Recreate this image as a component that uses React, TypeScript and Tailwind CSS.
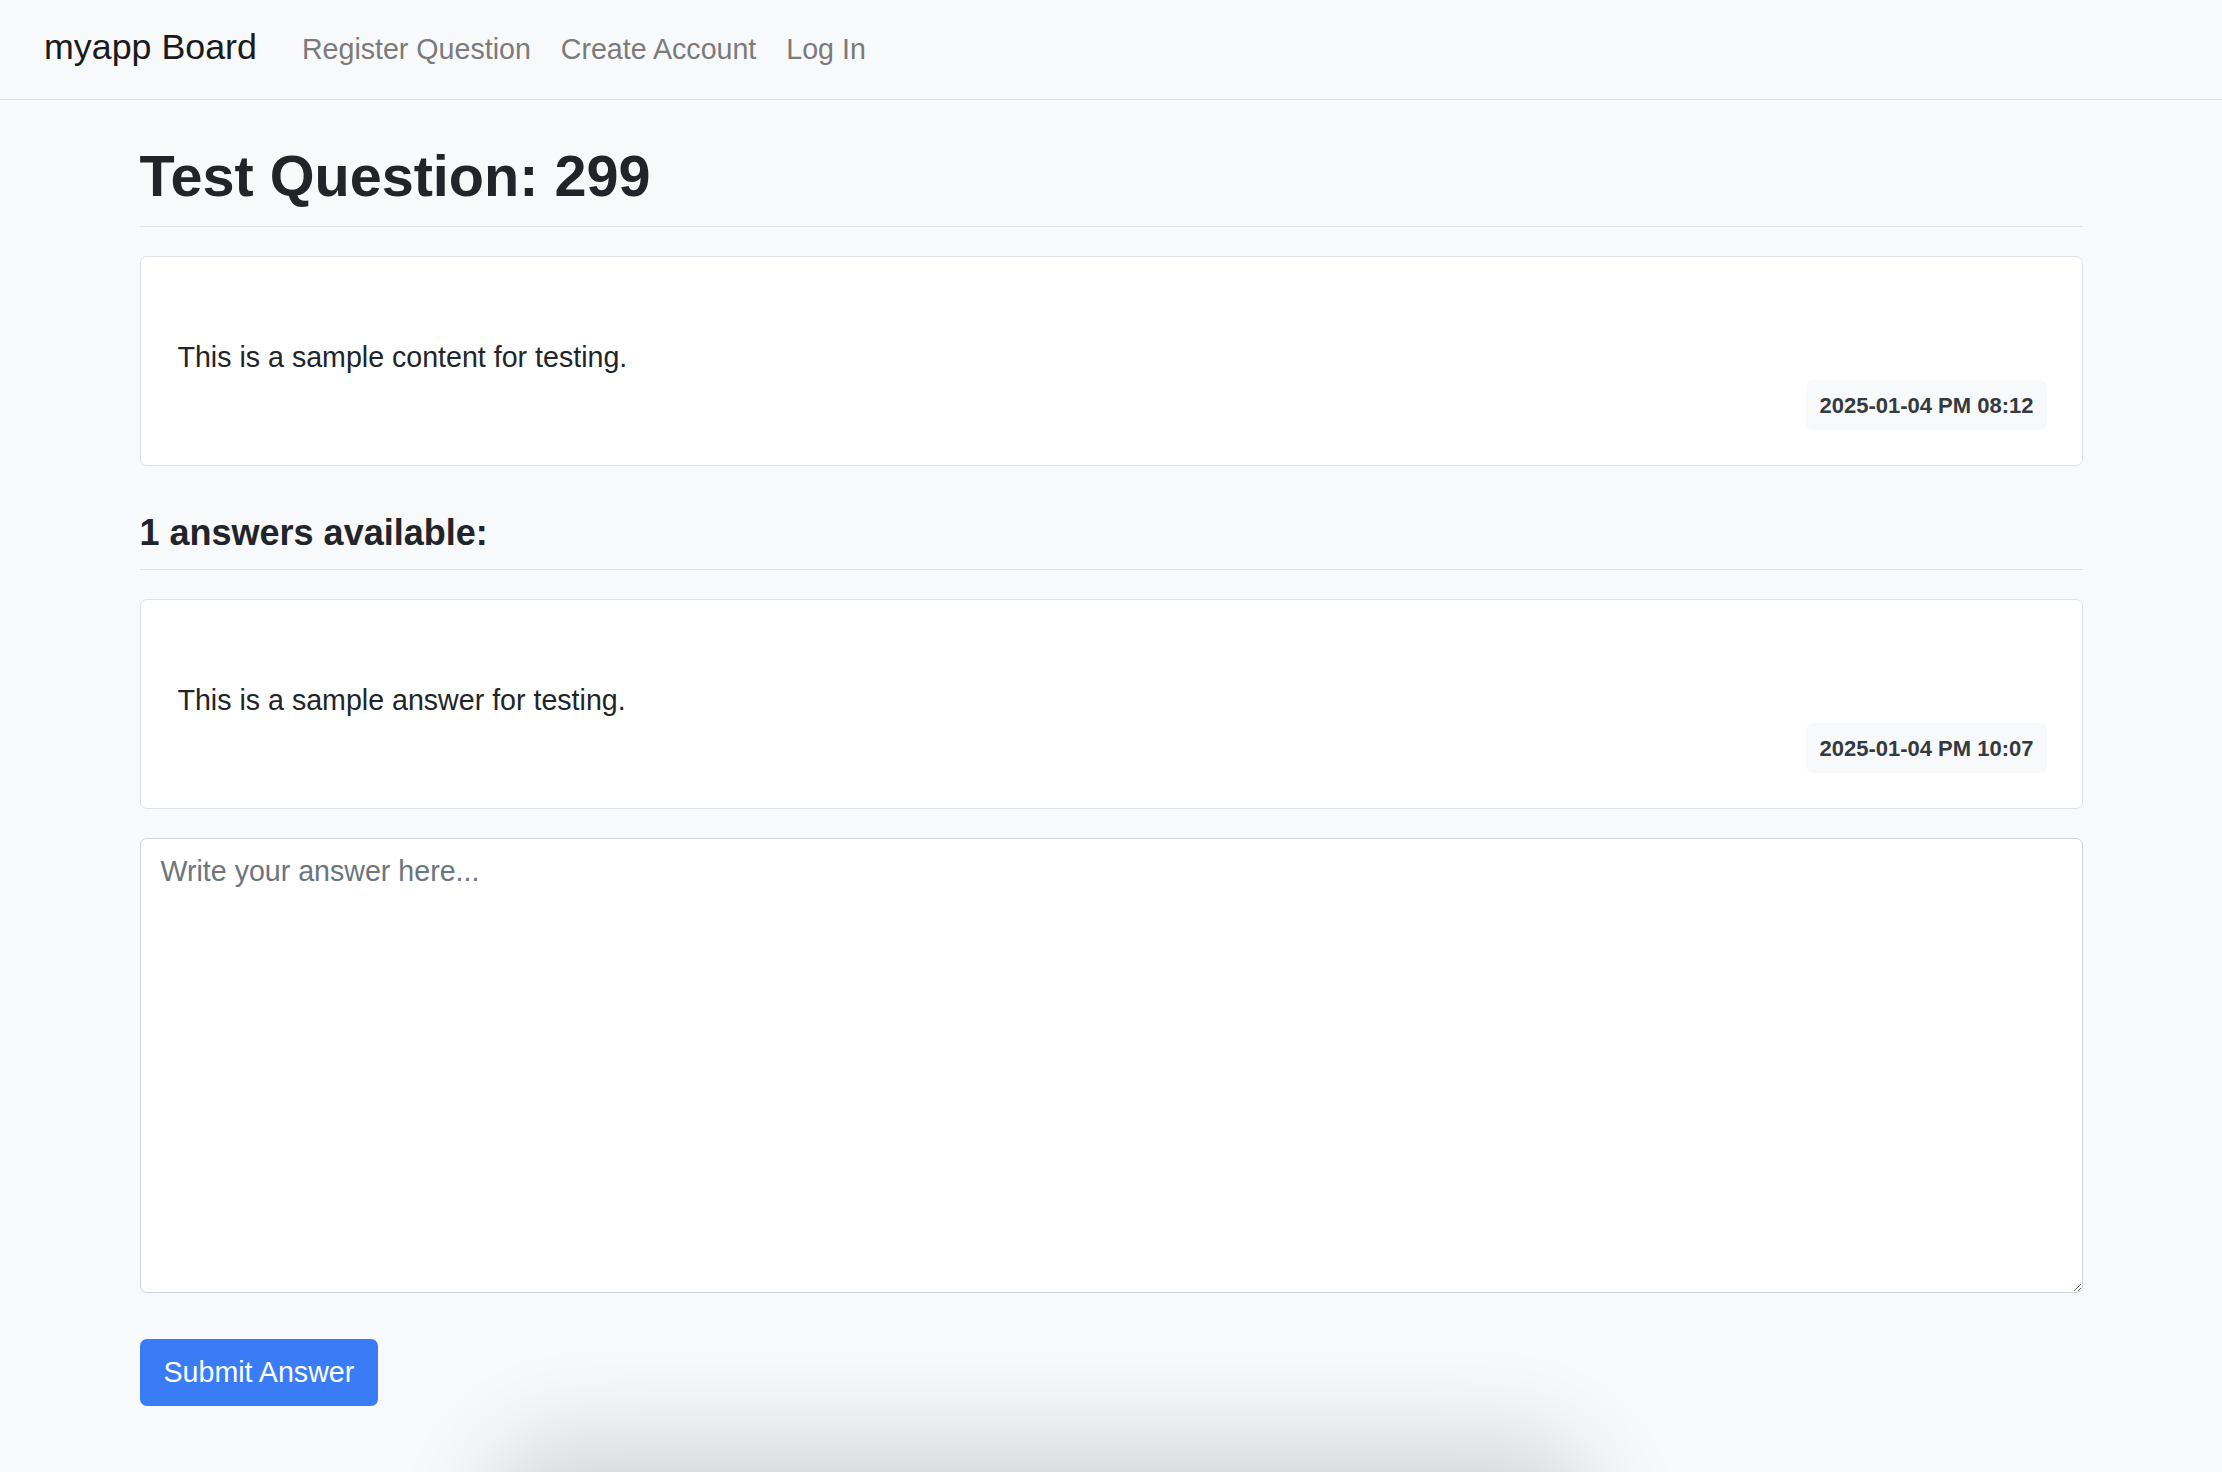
import React from 'react';

const font = { fontFamily: '"Liberation Sans", Arial, Helvetica, sans-serif' };

interface PostCardProps {
    content: string;
    date: string;
}

const PostCard: React.FC<PostCardProps> = ({ content, date }) => (
    <div className="border border-[#dee2e6] rounded-[7px] bg-white pl-[37px] pr-[35px] pt-[79px] pb-[35px]">
        <p className="text-[28.6px] leading-[42px] text-[#212529]">{content}</p>
        <div className="flex justify-end mt-[2px]">
            <span className="h-[50px] flex items-center px-[13px] rounded-[7px] bg-[#f8f9fa] text-[22px] font-bold text-[#343a40]">
                {date}
            </span>
        </div>
    </div>
);

const App: React.FC = () => {
    return (
        <div className="min-h-screen bg-[#f8f9fa] relative overflow-hidden" style={font}>
            <nav className="h-[100px] border-b border-[#dee2e6] flex items-center pl-[44px] pb-[3px]">
                <a className="text-[35.8px] text-[#1a1a1a] mr-[45px]">myapp Board</a>
                <div className="flex items-center gap-[30px] text-[28.6px] text-[#7b7b7b] pt-[2px]">
                    <a>Register Question</a>
                    <a>Create Account</a>
                    <a>Log In</a>
                </div>
            </nav>

            <main className="mx-auto w-[1943px] pb-[60px]">
                <h1 className="mt-[42px] text-[57.6px] leading-[68px] font-bold text-[#212529] pb-[16px] border-b border-[#dee2e6] mb-[29px]">
                    Test Question: 299
                </h1>

                <PostCard content="This is a sample content for testing." date="2025-01-04 PM 08:12" />

                <h5 className="mt-[45px] text-[36px] leading-[43px] font-bold text-[#212529] pb-[15px] border-b border-[#dee2e6] mb-[29px]">
                    1 answers available:
                </h5>

                <PostCard content="This is a sample answer for testing." date="2025-01-04 PM 10:07" />

                <form className="mt-[29px]" onSubmit={(e) => e.preventDefault()}>
                    <textarea
                        className="block w-full h-[455px] bg-white border border-[#ced4da] rounded-[7px] px-[20px] py-[11px] text-[28.6px] leading-[42px] text-[#212529] placeholder:text-[#6c757d] outline-none"
                        style={font}
                        placeholder="Write your answer here..."
                    />
                    <button
                        type="submit"
                        className="mt-[46px] h-[67px] px-[24px] rounded-[7px] bg-[#3a7cf6] text-white text-[28.6px]"
                        style={font}
                    >
                        Submit Answer
                    </button>
                </form>
            </main>

            <div className="fixed left-[520px] w-[1040px] top-[1472px] h-[100px] rounded-[50px] bg-[#d8d8d8] shadow-[0_0_90px_40px_rgba(0,0,0,0.13)]" />
        </div>
    );
};

export default App;
